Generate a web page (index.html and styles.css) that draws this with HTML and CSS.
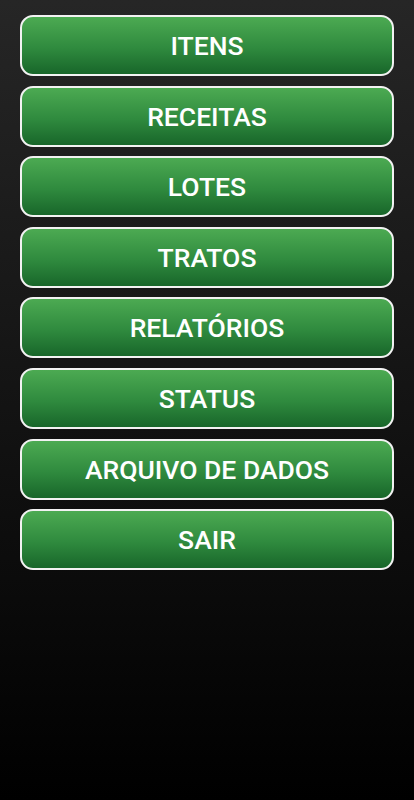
FILE: index.html
```html
<!DOCTYPE html>
<html lang="pt-BR">

<head>
    <meta charset="UTF-8">
    <meta name="viewport" content="width=device-width, initial-scale=1.0">
    <title>Menu</title>
    <link rel="stylesheet" href="styles.css">
</head>

<body>
    <div class="menu">
        <button type="button" class="menu-btn">ITENS</button>
        <button type="button" class="menu-btn">RECEITAS</button>
        <button type="button" class="menu-btn">LOTES</button>
        <button type="button" class="menu-btn">TRATOS</button>
        <button type="button" class="menu-btn">RELATÓRIOS</button>
        <button type="button" class="menu-btn">STATUS</button>
        <button type="button" class="menu-btn">ARQUIVO DE DADOS</button>
        <button type="button" class="menu-btn">SAIR</button>
    </div>
</body>

</html>
```

FILE: styles.css
```css
html,
body {
    height: 100%;
}

body {
    margin: 0;
    padding: 0;
    font-family: 'Roboto', 'Liberation Sans', sans-serif;
    background: linear-gradient(to bottom, #262626 0%, #0a0a0a 75%, #000 100%);
}

.menu {
    display: flex;
    flex-direction: column;
    gap: 9.6px;
    padding: 15px 20px;
}

.menu-btn {
    height: 61px;
    padding: 0;
    border: 2px solid #f2f2f2;
    border-radius: 13px;
    background: linear-gradient(to bottom, #4caa52 0%, #2f8a3e 55%, #18662a 100%);
    color: #fff;
    font-family: inherit;
    font-size: 26.5px;
    font-weight: 500;
    cursor: pointer;
}
```
